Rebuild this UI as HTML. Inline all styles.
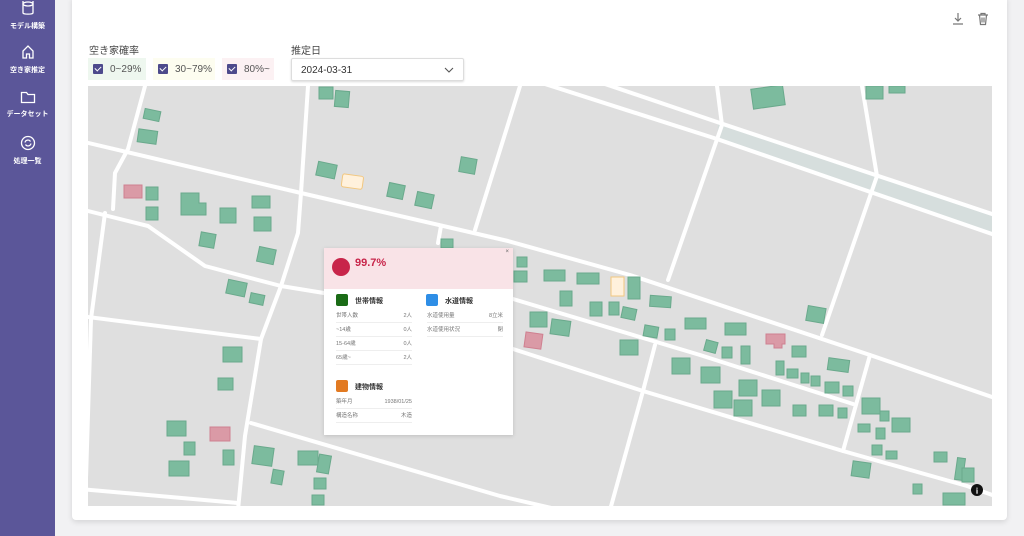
<!DOCTYPE html>
<html><head><meta charset="utf-8">
<style>
*{margin:0;padding:0;box-sizing:border-box}
body{width:1024px;height:536px;background:#f1f1f3;font-family:"Liberation Sans","Noto Sans CJK JP",sans-serif;position:relative;overflow:hidden;color:#333}
.side{position:absolute;left:0;top:0;width:55px;height:536px;background:#5b5699}
.si{position:absolute;left:0;width:55px;text-align:center;color:#fff;font-size:7px;font-weight:bold}
.card{position:absolute;left:72px;top:-4px;width:935px;height:524px;background:#fff;border-radius:4px;box-shadow:0 2px 6px rgba(0,0,0,.12)}
.lbl{position:absolute;font-size:10px;color:#444}
.chk{position:absolute;top:58px;height:22px;font-size:10px;color:#555;display:flex;align-items:center;padding-left:5px}
.chk i{display:inline-block;width:10px;height:10px;background:#4d4a8c;border-radius:1px;margin-right:7px;position:relative}
.chk i:after{content:"";position:absolute;left:3px;top:1px;width:3px;height:5px;border:solid #fff;border-width:0 1px 1px 0;transform:rotate(45deg)}
.dd{position:absolute;left:291px;top:58px;width:173px;height:23px;border:1px solid #ddd;border-radius:2px;box-shadow:0 1px 2px rgba(0,0,0,.15);font-size:10px;padding:6px 9px;color:#333}
.pop{position:absolute;left:324px;top:248px;width:189px;height:187px;background:#fff;box-shadow:0 1px 4px rgba(0,0,0,.15);font-size:5.5px;color:#777}
.hd{height:41px;background:#f9e3e7;position:relative}
.sq{position:absolute;width:12px;height:12px;border-radius:2px}
.st{position:absolute;font-size:7px;font-weight:bold;color:#333}
.row{position:absolute;width:76px;border-bottom:1px solid #eee;height:13px;line-height:12px}
.row b{font-weight:normal;float:right}
</style></head><body>
<div class="side">
 <div class="si" style="top:0px"><svg width="14" height="16" viewBox="0 0 14 16"><ellipse cx="7" cy="4" rx="5" ry="2" fill="none" stroke="#fff" stroke-width="1.3"/><path d="M2 1v12c0 1.5 10 1.5 10 0V1" fill="none" stroke="#fff" stroke-width="1.3"/></svg><div style="margin-top:3px">モデル構築</div></div>
 <div class="si" style="top:44px"><svg width="14" height="16" viewBox="0 0 14 16"><path d="M2 14V7l5-5 5 5v7H8.5v-4h-3v4z" fill="none" stroke="#fff" stroke-width="1.3"/></svg><div style="margin-top:3px">空き家推定</div></div>
 <div class="si" style="top:90px"><svg width="16" height="14" viewBox="0 0 16 14"><path d="M1.5 2.5h5l1.5 2h6.5v8h-13z" fill="none" stroke="#fff" stroke-width="1.3"/></svg><div style="margin-top:3px">データセット</div></div>
 <div class="si" style="top:135px"><svg width="16" height="16" viewBox="0 0 16 16"><circle cx="8" cy="8" r="6.5" fill="none" stroke="#fff" stroke-width="1.3"/><path d="M5 7.5a3 3 0 0 1 5.5-1M11 8.5a3 3 0 0 1-5.5 1" fill="none" stroke="#fff" stroke-width="1.2"/></svg><div style="margin-top:3px">処理一覧</div></div>
</div>
<div class="card"></div>
<svg style="position:absolute;left:950px;top:11px" width="45" height="16" viewBox="0 0 45 16"><path d="M8 2v8M5 7l3 3 3-3M3 13h10" fill="none" stroke="#777" stroke-width="1.2"/><path d="M28 4h10M31 4V2.5h4V4M29.5 4l1 9.5h5l1-9.5M32 6.5v5M34 6.5v5" fill="none" stroke="#777" stroke-width="1.2"/></svg>
<div class="lbl" style="left:89px;top:42px">空き家確率</div>
<div class="lbl" style="left:291px;top:42px">推定日</div>
<div class="chk" style="left:88px;width:58px;background:#eef7ef"><i></i>0~29%</div>
<div class="chk" style="left:153px;width:62px;background:#fdfdf0"><i></i>30~79%</div>
<div class="chk" style="left:222px;width:52px;background:#fcf1f3"><i></i>80%~</div>
<div class="dd">2024-03-31<svg style="position:absolute;right:9px;top:8px" width="10" height="6" viewBox="0 0 10 6"><path d="M1 1l4 4 4-4" fill="none" stroke="#555" stroke-width="1.1"/></svg></div>

<svg style="position:absolute;left:88px;top:86px" width="904" height="420" viewBox="88 86 904 420">
<rect x="88" y="86" width="904" height="420" fill="#dfdfdf"/>
<path d="M718 123L995 215L995 235L717 139Z" fill="#d6dedd"/>
<g fill="none" stroke="#fff" stroke-width="4" stroke-linejoin="round" stroke-linecap="round">
<path d="M80 141L301 193L508 241L630 275L870 355L995 398"/>
<path d="M545 84L717 139L995 235"/>
<path d="M605 84L720 123L995 215"/>
<path d="M308 86L301 193L298 233L281 286L261 339L245 436L238 510"/>
<path d="M145 86L128 149L115 173L113 209"/>
<path d="M80 209L148 226L205 266L281 286L330 294"/>
<path d="M105 213L91 319L85 510"/>
<path d="M80 316L261 339"/>
<path d="M251 423L500 496L560 510"/>
<path d="M80 489L238 503"/>
<path d="M441 226L438 243"/>
<path d="M520 86L475 230"/>
<path d="M717 86L722 125L668 280"/>
<path d="M862 86L877 176L822 335"/>
<path d="M513 299L700 355L853 404"/>
<path d="M513 349L643 391L843 451L967 486L995 496"/>
<path d="M655 345L643 391L610 510"/>
<path d="M870 355L843 451"/>
</g>
<g fill="#7cbb9e" stroke="#6aa98c" stroke-width="1">
<rect x="144" y="110" width="16" height="10" transform="rotate(12 152 115)"/>
<rect x="138" y="130" width="19" height="13" transform="rotate(8 147 136)"/>
<rect x="146" y="187" width="12" height="13"/><rect x="146" y="207" width="12" height="13"/>
<path d="M181 193h18v10h7v12h-25z"/>
<rect x="220" y="208" width="16" height="15"/><rect x="252" y="196" width="18" height="12"/><rect x="254" y="217" width="17" height="14"/>
<rect x="200" y="233" width="15" height="14" transform="rotate(10 207 240)"/>
<rect x="258" y="248" width="17" height="15" transform="rotate(12 266 255)"/>
<rect x="227" y="281" width="19" height="14" transform="rotate(12 236 288)"/>
<rect x="250" y="294" width="14" height="10" transform="rotate(12 257 299)"/>
<rect x="223" y="347" width="19" height="15"/><rect x="218" y="378" width="15" height="12"/>
<rect x="167" y="421" width="19" height="15"/><rect x="184" y="442" width="11" height="13"/><rect x="169" y="461" width="20" height="15"/>
<rect x="223" y="450" width="11" height="15"/>
<rect x="253" y="447" width="20" height="18" transform="rotate(8 263 456)"/>
<rect x="272" y="470" width="11" height="14" transform="rotate(10 277 477)"/>
<rect x="298" y="451" width="20" height="14"/><rect x="318" y="455" width="12" height="18" transform="rotate(10 324 464)"/>
<rect x="314" y="478" width="12" height="11"/><rect x="312" y="495" width="12" height="10"/>
<rect x="319" y="87" width="14" height="12"/><rect x="335" y="91" width="14" height="16" transform="rotate(5 342 99)"/>
<rect x="317" y="163" width="19" height="14" transform="rotate(12 326 170)"/>
<rect x="388" y="184" width="16" height="14" transform="rotate(12 396 191)"/>
<rect x="416" y="193" width="17" height="14" transform="rotate(12 424 200)"/>
<rect x="460" y="158" width="16" height="15" transform="rotate(10 468 165)"/>
<rect x="441" y="239" width="12" height="9"/>
<rect x="752" y="87" width="32" height="20" transform="rotate(-8 768 97)"/>
<rect x="866" y="86" width="17" height="13"/><rect x="889" y="86" width="16" height="7"/>
<rect x="517" y="257" width="10" height="10"/><rect x="514" y="271" width="13" height="11"/>
<rect x="544" y="270" width="21" height="11"/><rect x="577" y="273" width="22" height="11"/>
<rect x="628" y="277" width="12" height="22"/><rect x="650" y="296" width="21" height="11" transform="rotate(4 660 301)"/>
<rect x="560" y="291" width="12" height="15"/><rect x="590" y="302" width="12" height="14"/><rect x="609" y="302" width="10" height="13"/><rect x="622" y="308" width="14" height="11" transform="rotate(12 629 313)"/>
<rect x="530" y="312" width="17" height="15"/><rect x="551" y="320" width="19" height="15" transform="rotate(8 560 327)"/>
<rect x="620" y="340" width="18" height="15"/><rect x="644" y="326" width="14" height="11" transform="rotate(10 651 331)"/><rect x="665" y="329" width="10" height="11"/>
<rect x="685" y="318" width="21" height="11"/><rect x="725" y="323" width="21" height="12"/>
<rect x="705" y="341" width="12" height="11" transform="rotate(15 711 346)"/><rect x="722" y="347" width="10" height="11"/><rect x="741" y="346" width="9" height="18"/>
<rect x="672" y="358" width="18" height="16"/><rect x="701" y="367" width="19" height="16"/><rect x="739" y="380" width="18" height="16"/>
<rect x="714" y="391" width="18" height="17"/><rect x="734" y="400" width="18" height="16"/><rect x="762" y="390" width="18" height="16"/>
<rect x="807" y="307" width="18" height="15" transform="rotate(10 816 314)"/>
<rect x="792" y="346" width="14" height="11"/><rect x="776" y="361" width="8" height="14"/><rect x="787" y="369" width="11" height="9"/><rect x="801" y="373" width="8" height="10"/><rect x="811" y="376" width="9" height="10"/>
<rect x="828" y="359" width="21" height="12" transform="rotate(8 838 365)"/><rect x="825" y="382" width="14" height="11"/><rect x="843" y="386" width="10" height="10"/>
<rect x="793" y="405" width="13" height="11"/><rect x="819" y="405" width="14" height="11"/><rect x="838" y="408" width="9" height="10"/>
<rect x="862" y="398" width="18" height="16"/><rect x="880" y="411" width="9" height="10"/><rect x="892" y="418" width="18" height="14"/>
<rect x="858" y="424" width="12" height="8"/><rect x="876" y="428" width="9" height="11"/>
<rect x="872" y="445" width="10" height="10"/><rect x="886" y="451" width="11" height="8"/>
<rect x="852" y="462" width="18" height="15" transform="rotate(8 861 470)"/>
<rect x="934" y="452" width="13" height="10"/><rect x="956" y="458" width="8" height="22" transform="rotate(8 960 469)"/><rect x="962" y="468" width="12" height="14"/>
<rect x="913" y="484" width="9" height="10"/><rect x="943" y="493" width="22" height="12"/>
</g>
<g stroke-width="1">
<rect x="124" y="185" width="18" height="13" fill="#da9aa6" stroke="#cf8090"/>
<rect x="210" y="427" width="20" height="14" fill="#da9aa6" stroke="#cf8090"/>
<rect x="525" y="333" width="17" height="15" fill="#da9aa6" stroke="#cf8090" transform="rotate(8 533 340)"/>
<path d="M766 334h19v10h-3v4h-8v-4h-8z" fill="#da9aa6" stroke="#cf8090"/>
<rect x="342" y="175" width="21" height="13" rx="2" fill="#fff1dc" stroke="#f2c77f" transform="rotate(8 352 181)"/>
<rect x="611" y="277" width="13" height="19" fill="#fff1dc" stroke="#f2c77f"/>
</g>
<circle cx="977" cy="490" r="6" fill="#111"/><text x="977" y="493.5" font-size="8" font-weight="bold" fill="#fff" text-anchor="middle" font-family="Liberation Serif">i</text>
</svg>

<div class="pop">
 <div class="hd"><div style="position:absolute;left:8px;top:10px;width:18px;height:18px;border-radius:50%;background:#c8254a"></div>
 <div style="position:absolute;left:31px;top:9px;font-size:11px;font-weight:bold;color:#c8254a">99.7%</div>
 <div style="position:absolute;right:4px;top:1px;font-size:6px;color:#666">×</div></div>
 <div class="sq" style="left:12px;top:46px;background:#1a6b16"></div><div class="st" style="left:31px;top:48px">世帯情報</div>
 <div class="sq" style="left:102px;top:46px;background:#2e8ee6"></div><div class="st" style="left:121px;top:48px">水道情報</div>
 <div class="row" style="left:12px;top:62px">世帯人数<b>2人</b></div>
 <div class="row" style="left:12px;top:76px">~14歳<b>0人</b></div>
 <div class="row" style="left:12px;top:90px">15-64歳<b>0人</b></div>
 <div class="row" style="left:12px;top:104px">65歳~<b>2人</b></div>
 <div class="row" style="left:103px;top:62px">水道使用量<b>8立米</b></div>
 <div class="row" style="left:103px;top:76px">水道使用状況<b>閉</b></div>
 <div class="sq" style="left:12px;top:132px;background:#e27a22"></div><div class="st" style="left:31px;top:134px">建物情報</div>
 <div class="row" style="left:12px;top:148px">築年月<b>1938/01/25</b></div>
 <div class="row" style="left:12px;top:162px">構造名称<b>木造</b></div>
</div>
</body></html>
